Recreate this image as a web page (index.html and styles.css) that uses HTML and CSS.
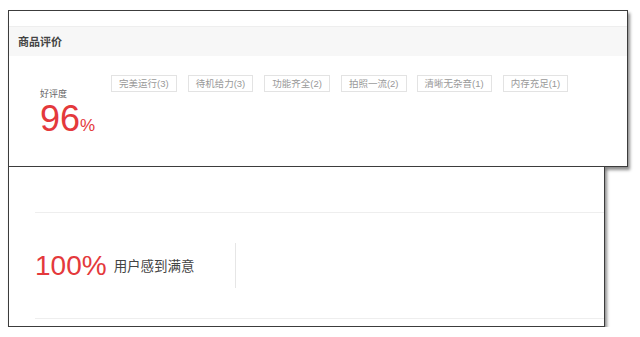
FILE: index.html
```html
<!DOCTYPE html>
<html lang="zh-CN">
<head>
    <meta charset="UTF-8">
    <meta name="viewport" content="width=device-width, initial-scale=1.0">
    <title>商品评价</title>
    <link rel="stylesheet" href="styles.css">
</head>
<body>
    <!-- Review summary card -->
    <div class="shot shot-top">
        <div class="review-head">商品评价</div>
        <div class="review-body">
            <div class="rate">
                <div class="rate-label">好评度</div>
                <div class="rate-value">96<span class="rate-unit">%</span></div>
            </div>
            <div class="tags">
                <span class="tag">完美运行(3)</span>
                <span class="tag">待机给力(3)</span>
                <span class="tag">功能齐全(2)</span>
                <span class="tag">拍照一流(2)</span>
                <span class="tag">清晰无杂音(1)</span>
                <span class="tag">内存充足(1)</span>
            </div>
        </div>
    </div>

    <!-- Satisfaction card -->
    <div class="shot shot-bottom">
        <div class="stats">
            <div class="stat">
                <span class="stat-num">100%</span>
                <span class="stat-text">用户感到满意</span>
            </div>
            <div class="stat-divider"></div>
        </div>
    </div>
</body>
</html>
```

FILE: styles.css
```css
* {
    box-sizing: border-box;
    margin: 0;
    padding: 0;
}

body {
    background-color: #fff;
    padding: 10px 0 0 8px;
    font-family: "Liberation Sans", "Noto Sans CJK SC", sans-serif;
    color: #333;
}

.shot {
    background-color: #fff;
    border: 1px solid #3c3c3c;
    box-shadow: 2px 3px 3px rgba(0, 0, 0, 0.45);
}

.shot-top {
    width: 620px;
    height: 157px;
    padding-top: 15px;
}

.shot-bottom {
    width: 597px;
    height: 161px;
    margin-top: -1px;
    padding: 45px 0 0 26px;
}

.review-head {
    height: 30px;
    line-height: 30px;
    padding-left: 9px;
    background-color: #f7f7f7;
    border-top: 1px solid #eee;
    font-size: 11px;
    font-weight: bold;
    color: #444;
}

.review-body {
    display: flex;
}

.rate {
    width: 102px;
    padding: 32px 0 0 31px;
}

.rate-label {
    font-size: 9px;
    color: #666;
    line-height: 12px;
    margin-bottom: 4px;
}

.rate-value {
    font-size: 36px;
    line-height: 30px;
    color: #e4393c;
}

.rate-unit {
    font-size: 17px;
}

.tags {
    display: flex;
    flex-wrap: wrap;
    gap: 11px;
    padding-top: 19px;
    align-self: flex-start;
}

.tag {
    height: 17px;
    line-height: 15px;
    padding: 0 7px;
    border: 1px solid #e3e3e3;
    font-size: 9.5px;
    color: #999;
}

.tag:nth-child(5) {
    margin-left: -1px;
}

.stats {
    display: flex;
    align-items: center;
    height: 107px;
    border-top: 1px solid #eee;
    border-bottom: 1px solid #eee;
}

.stat {
    display: flex;
    align-items: center;
    gap: 7px;
    width: 200px;
}

.stat-num {
    font-size: 28px;
    line-height: 30px;
    color: #e4393c;
}

.stat-text {
    font-size: 13.5px;
    line-height: 16px;
    padding-top: 2px;
    color: #444;
}

.stat-divider {
    width: 1px;
    height: 45px;
    background-color: #e6e6e6;
}
```
